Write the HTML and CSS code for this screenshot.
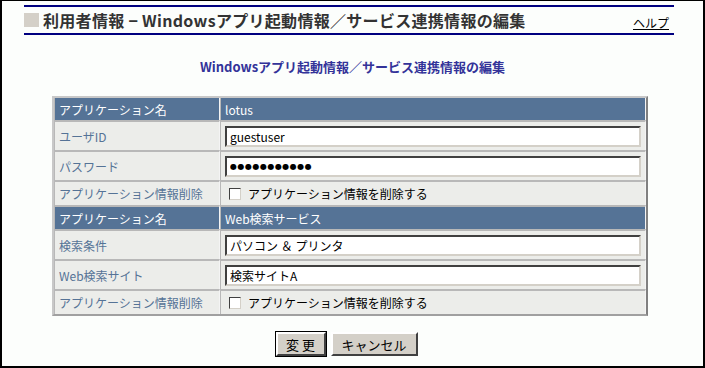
FILE: index.html
```html
<!DOCTYPE html>
<html lang="ja">
<head>
    <meta charset="UTF-8">
    <title>利用者情報 - Windowsアプリ起動情報／サービス連携情報の編集</title>
    <link rel="stylesheet" href="styles.css">
</head>
<body>
<div class="page">

    <!-- page title -->
    <div class="title-bar">
        <span class="title-mark"></span>
        <h1 class="title">利用者情報 − Windowsアプリ起動情報／サービス連携情報の編集</h1>
        <a class="help" href="#">ヘルプ</a>
    </div>

    <h2 class="subtitle">Windowsアプリ起動情報／サービス連携情報の編集</h2>

    <!-- edit form -->
    <form class="edit-form">
        <table class="edit-table">
            <tr class="head-row">
                <td class="label">アプリケーション名</td>
                <td class="value">lotus</td>
            </tr>
            <tr class="input-row">
                <td class="label">ユーザID</td>
                <td class="value"><input type="text" class="text-input" value="guestuser"></td>
            </tr>
            <tr class="input-row">
                <td class="label">パスワード</td>
                <td class="value"><input type="text" class="text-input pw-input" value="●●●●●●●●●●●"></td>
            </tr>
            <tr class="check-row">
                <td class="label">アプリケーション情報削除</td>
                <td class="value"><label class="check"><span class="box"></span>アプリケーション情報を削除する</label></td>
            </tr>
            <tr class="head-row">
                <td class="label">アプリケーション名</td>
                <td class="value">Web検索サービス</td>
            </tr>
            <tr class="input-row">
                <td class="label">検索条件</td>
                <td class="value"><input type="text" class="text-input" value="パソコン ＆ プリンタ"></td>
            </tr>
            <tr class="input-row">
                <td class="label">Web検索サイト</td>
                <td class="value"><input type="text" class="text-input" value="検索サイトA"></td>
            </tr>
            <tr class="check-row">
                <td class="label">アプリケーション情報削除</td>
                <td class="value"><label class="check"><span class="box"></span>アプリケーション情報を削除する</label></td>
            </tr>
        </table>

        <!-- buttons -->
        <div class="buttons">
            <button type="button" class="btn btn-default">変 更</button>
            <button type="button" class="btn btn-cancel">キャンセル</button>
        </div>
    </form>

</div>
</body>
</html>
```

FILE: styles.css
```css
html, body {
    margin: 0;
    padding: 0;
}

body {
    font-family: "Noto Sans CJK JP", "DejaVu Sans", sans-serif;
    font-size: 12px;
    background-color: #fcfefc;
}

.page {
    box-sizing: border-box;
    width: 705px;
    height: 368px;
    border-top: 1px solid #000;
    border-left: 2px solid #000;
    border-right: 2px solid #000;
    border-bottom: 2px solid #000;
    padding-top: 4px;
}

/* title with navy rules above and below */
.title-bar {
    display: flex;
    align-items: center;
    margin-left: 22px;
    width: 650px;
    height: 26px;
    border-top: 2px solid #000080;
    border-bottom: 2px solid #000080;
}

.title-mark {
    width: 15px;
    height: 14px;
    margin-right: 4px;
    background-color: #d4d0c8;
}

.title {
    flex: 1;
    margin: 0;
    font-size: 16px;
    font-weight: bold;
    color: #333;
    letter-spacing: 0.3px;
}

.help {
    color: #000;
    font-size: 12px;
    margin-right: 5px;
    margin-top: 4px;
}

.subtitle {
    margin: 24px 0 0 0;
    text-align: center;
    font-size: 13px;
    font-weight: bold;
    color: #333399;
    line-height: 16px;
}

.edit-form {
    margin: 0;
}

.edit-table {
    margin: 21px 0 0 50px;
    width: 596px;
    border-collapse: separate;
    border-spacing: 0;
    background-color: #ecedea;
    border-top: 2px solid #c8c8c8;
    border-left: 2px solid #c8c8c8;
    border-right: 2px solid #808080;
    border-bottom: 2px solid #a0a0a0;
}

.edit-table td {
    padding: 0 4px;
    border-top: 2px solid #b8b8b8;
    border-left: 1px solid #b8b8b8;
    border-right: 1px solid #f4f4f4;
    color: #557396;
}

.edit-table tr:first-child td {
    border-top: none;
}

.edit-table .label {
    width: 164px;
}

.edit-table .head-row td {
    height: 22px;
    background-color: #557396;
    color: #fff;
}

.input-row td {
    height: 28px;
}

.check-row td {
    height: 23px;
}

.text-input {
    box-sizing: border-box;
    width: 416px;
    height: 21px;
    margin: 0;
    padding: 0 3px;
    font-family: "Noto Sans CJK JP", "DejaVu Sans", sans-serif;
    font-size: 12px;
    color: #000;
    background-color: #fff;
    border: 2px solid;
    border-color: #404040 #d4d0c8 #d4d0c8 #404040;
}

.pw-input {
    font-family: "DejaVu Sans", sans-serif;
    font-size: 8px;
    letter-spacing: 0.5px;
}

.check {
    display: flex;
    align-items: center;
    color: #000;
}

.box {
    width: 10px;
    height: 10px;
    margin: 0 7px 0 4px;
    background-color: #fff;
    border: 1px solid;
    border-color: #404040 #d4d0c8 #d4d0c8 #404040;
}

.buttons {
    display: flex;
    justify-content: center;
    gap: 5px;
    margin-top: 16px;
    padding-right: 12px;
}

.btn {
    height: 24px;
    padding: 0;
    font-family: "Noto Sans CJK JP", "DejaVu Sans", sans-serif;
    font-size: 13px;
    color: #000;
    background-color: #d4d0c8;
    border: 2px solid;
    border-color: #fff #404040 #404040 #fff;
}

.btn-default {
    width: 50px;
    outline: 1px solid #000;
    outline-offset: 0;
}

.btn-cancel {
    width: 87px;
}
```
